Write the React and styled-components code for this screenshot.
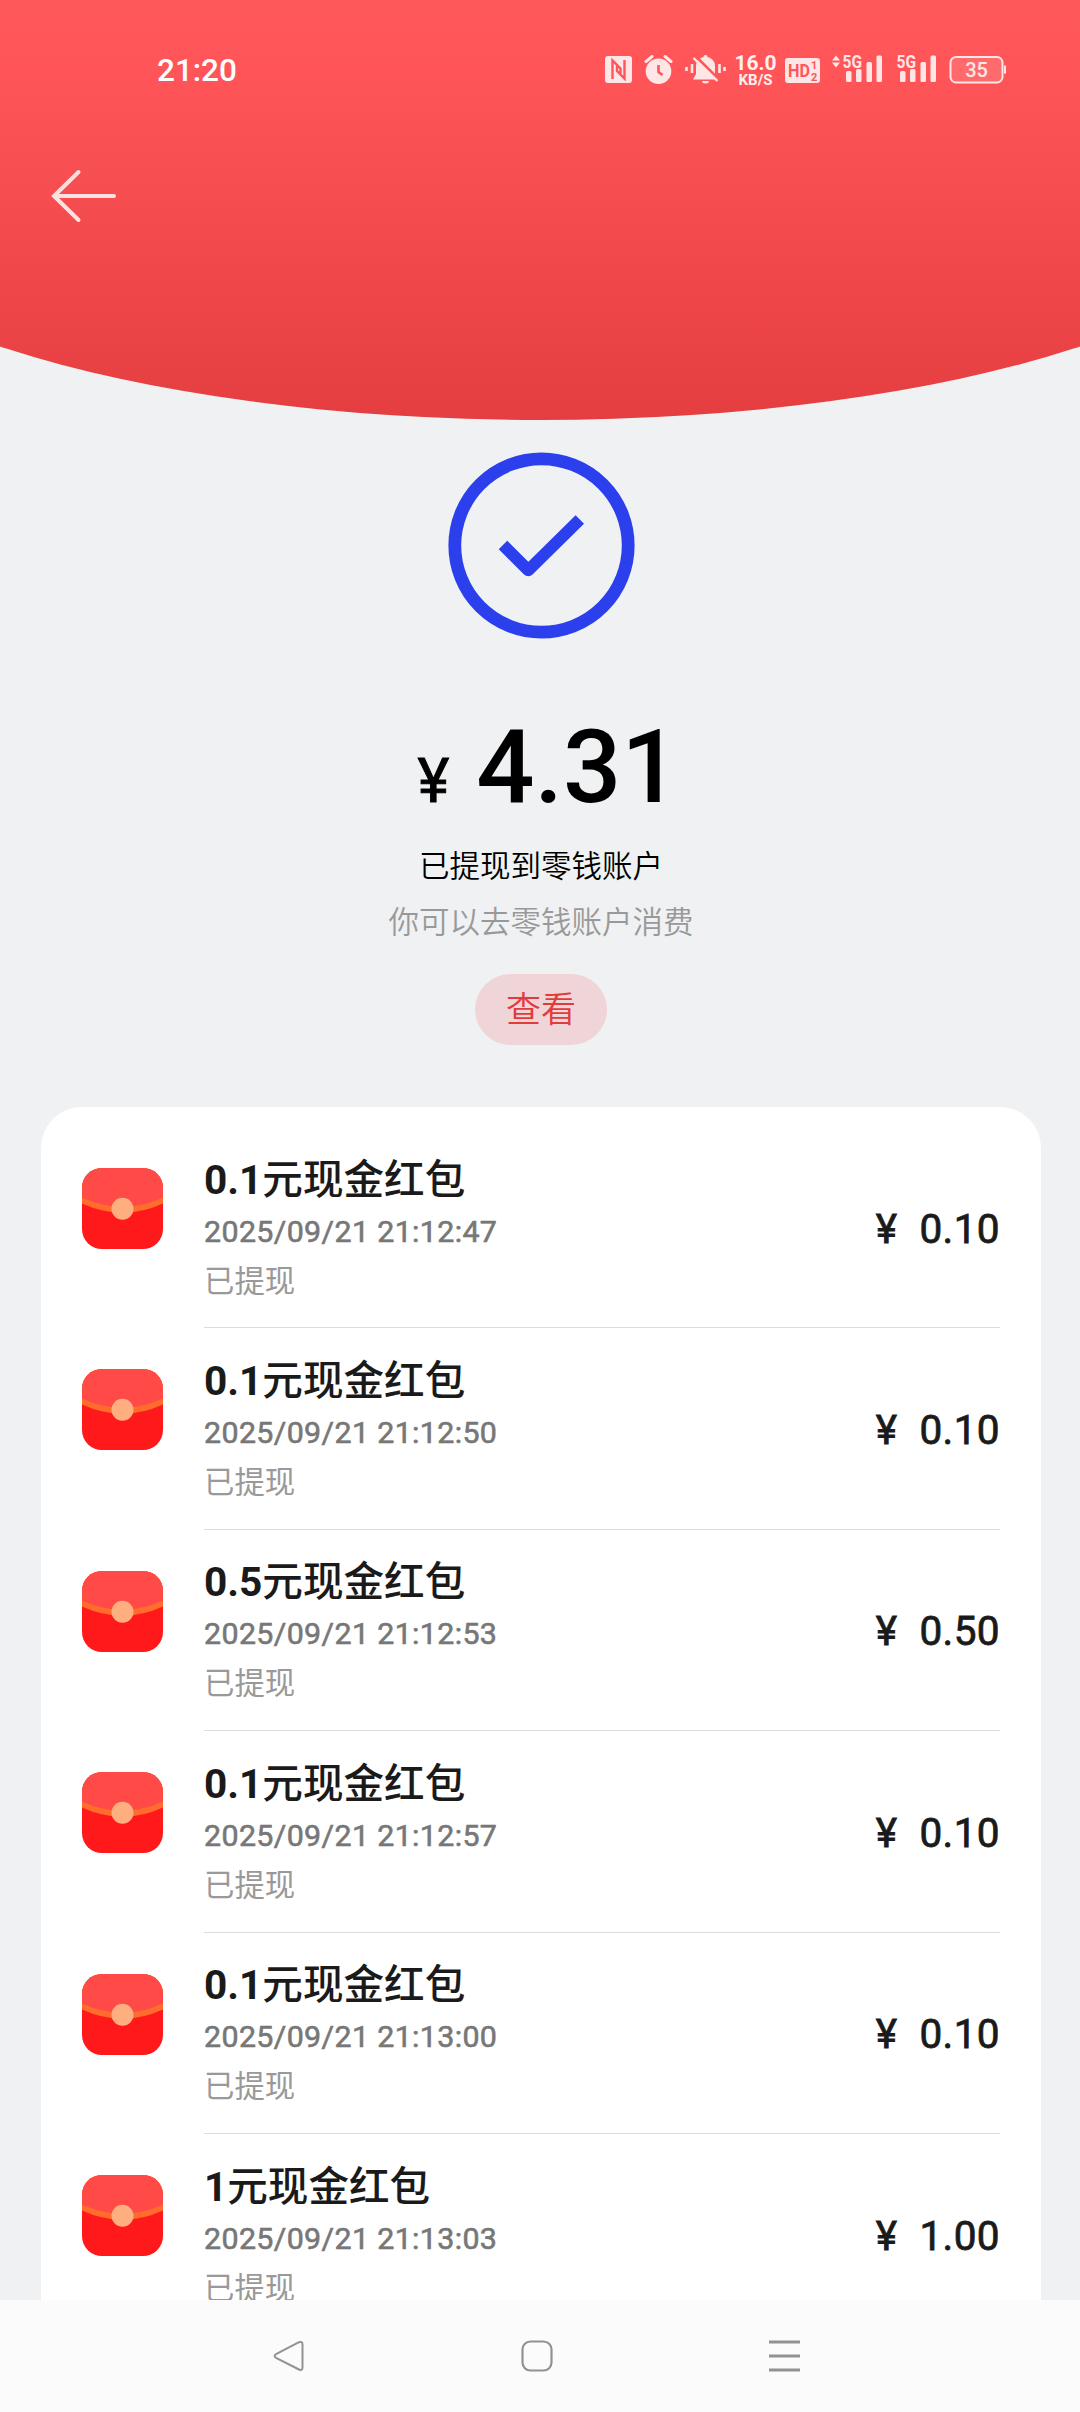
import React from "react";
import styled, { createGlobalStyle, css } from "styled-components";

const GlobalStyle = createGlobalStyle`
* { box-sizing: border-box; }
body {
margin: 0;
background: #eff1f3;
font-family: Roboto, "Noto Sans CJK SC", sans-serif;
}
svg { display: block; flex: none; }
`;

const Screen = styled.div`
display: flex;
flex-direction: column;
width: 1080px;
height: 2412px;
overflow: hidden;
background: #eff1f3;
`;

const Header = styled.header`
flex: none;
height: 420px;
overflow: hidden;
`;

/* wider than the screen, so that only the flat part of the arc shows */
const Arc = styled.div`
width: 140%;
height: 100%;
margin-left: -20%;
padding: 0 216px;
border-radius: 0 0 50% 50% / 0 0 245px 245px;
background: linear-gradient(#ff585b 0%, #ff5558 17%, #e53e40 100%);
`;

const StatusBar = styled.div`
display: flex;
align-items: center;
justify-content: space-between;
height: 140px;
padding: 0 74px 0 157px;
color: #ffe6e6;
`;

const Clock = styled.span`
font-size: 31.5px;
font-weight: 500;
color: #fff;
`;

const StatusIcons = styled.div`
display: flex;
align-items: center;
gap: 12px;
`;

const Speed = styled.div`
display: flex;
flex-direction: column;
align-items: center;
width: 35px;
padding-top: 1px;
font-size: 21px;
font-weight: 700;
line-height: 18px;
white-space: nowrap;
color: #fff0f0;
small {
font-size: 15px;
line-height: 16px;
}
`;

const BackButton = styled.button`
display: block;
margin: 26px 0 0 48px;
padding: 0;
border: 0;
background: none;
`;

const Result = styled.section`
display: flex;
flex: none;
flex-direction: column;
align-items: center;
height: 687px;
padding: 32px 0 0 2px;
`;

const Total = styled.div`
display: flex;
align-items: baseline;
gap: 27px;
margin-top: 67px;
padding-left: 15px;
font-size: 102.5px;
font-weight: 500;
line-height: 120px;
color: #000;
span {
font-size: 60.5px;
font-weight: 400;
-webkit-text-stroke: 0.9px;
}
`;

const Note = styled.p`
margin: 0;
font-size: 30.5px;
font-weight: 350;
line-height: 56px;
color: #000;
&:first-of-type {
margin-top: -3px;
}
${props => props.$muted && css`
color: #999;
`}
`;

const ViewButton = styled.button`
width: 132px;
height: 71px;
margin-top: 23px;
padding: 0 0 6px;
border: 0;
border-radius: 36px;
background: #efd5d7;
color: #e23b3b;
font-family: inherit;
font-size: 35px;
font-weight: 350;
`;

const Card = styled.ul`
flex: 1;
min-height: 0;
margin: 0 39px 0 41px;
padding: 19px 41px 0;
overflow: hidden;
list-style: none;
border-radius: 41px 41px 0 0;
background: #fff;
`;

const Item = styled.li`
display: flex;
height: 201.4px;
padding-top: 42px;
`;

const ItemBody = styled.div`
display: flex;
flex: 1;
align-items: center;
justify-content: space-between;
height: 202.4px;
margin: -42px 0 0 41px;
border-bottom: 1px solid #dcdcdc;
`;

const ItemText = styled.div`
padding-top: 5px;
`;

const Title = styled.div`
font-size: 40.6px;
font-weight: 500;
line-height: 56px;
color: #1a1a1a;
b {
font-weight: 700;
}
`;

const Time = styled.div`
font-size: 30.4px;
font-weight: 400;
letter-spacing: 0.36px;
line-height: 48px;
color: #777;
-webkit-text-stroke: 0.6px;
`;

const State = styled.div`
font-size: 30.4px;
line-height: 51px;
color: #999;
`;

const Amount = styled.div`
display: flex;
gap: 22px;
padding-top: 4px;
font-size: 40.5px;
font-weight: 400;
letter-spacing: 0.4px;
color: #1a1a1a;
-webkit-text-stroke: 0.8px;
`;

const NavBar = styled.nav`
display: flex;
flex: none;
align-items: center;
justify-content: space-between;
height: 112px;
padding: 0 279px 0 273px;
background: #fbfbfb;
color: #929292;
`;

const NfcIcon = () => (
    <svg width="27" height="36" viewBox="0 0 27 36">
        <rect y="4" width="27" height="27" rx="3" fill="currentColor" />
        <path d="M7.500 27V8.500l8 8v5M19.500 8v18.500l-7.500-7.500v-5" fill="none" stroke="#ff5659" strokeWidth="2.400" />
    </svg>
);

const AlarmIcon = () => (
    <svg width="29" height="36" viewBox="0 0 29 36">
        <circle cx="14.500" cy="19.200" r="12.800" fill="currentColor" />
        <path d="M2 9.500l6-5M27 9.500l-6-5" stroke="currentColor" strokeWidth="3" strokeLinecap="round" />
        <path d="M14.500 13v7l4 3" fill="none" stroke="#ff5659" strokeWidth="2.600" />
    </svg>
);

const MuteBellIcon = () => (
    <svg width="41" height="36" viewBox="0 0 41 36">
        <path d="M18.500 5a2 2 0 0 1 4 0c4.500 1.200 7.500 4.500 7.500 9v8l3.500 5.500H8L11 22v-8c0-4.500 3-7.800 7.500-9zM17 29h7a3.500 2.500 0 0 1-7 0z" fill="currentColor" />
        <path d="M10.500 4l24 24" stroke="#ff5659" strokeWidth="2.600" />
        <path d="M8.500 6l24 23" stroke="currentColor" strokeWidth="2.400" />
        <path d="M1.500 15v4M7 12v9M34.500 12v9M39.500 15v4" stroke="currentColor" strokeWidth="2.600" />
    </svg>
);

const HdIcon = () => (
    <svg width="35" height="36" viewBox="0 0 35 36">
        <rect y="6" width="35" height="25" rx="3" fill="currentColor" />
        <g fill="#ff5659" fontWeight="700">
            <text x="3" y="25" fontSize="18" textLength="22" lengthAdjust="spacingAndGlyphs">HD</text>
            <text x="26" y="17" fontSize="11">1</text>
            <text x="26" y="28.500" fontSize="11">2</text>
        </g>
    </svg>
);

const SignalIcon = ({ data }) => {
    const x = data ? 10 : 0;
    return (
        <svg width={data ? 51 : 42} height="36" viewBox={data ? "0 0 51 36" : "-1 0 42 36"}>
            {data && <path d="M0 8.500l4-5 4 5zM0 10.500l4 5 4-5z" fill="currentColor" />}
            <text x={x + 0.5} y="15.500" fontSize="18" fontWeight="700" fill="currentColor" textLength="19.500" lengthAdjust="spacingAndGlyphs">5G</text>
            <g fill="currentColor">
                <rect x={x + 4} y="19" width="5.500" height="11" rx="1.500" />
                <rect x={x + 14} y="17" width="5.500" height="13" rx="1.500" />
                <rect x={x + 24.5} y="10" width="5.500" height="20" rx="1.500" />
                <rect x={x + 34.5} y="3.500" width="5.500" height="26.500" rx="1.500" />
            </g>
        </svg>
    );
};

const BatteryIcon = () => (
    <svg width="57" height="36" viewBox="0 0 57 36">
        <rect x="1.500" y="5" width="52" height="25.500" rx="5.500" fill="#fff" fillOpacity=".13" stroke="currentColor" strokeWidth="2" />
        <path d="M56 13.500v8" stroke="currentColor" strokeWidth="2" />
        <text x="27.500" y="24.500" textAnchor="middle" fontSize="20" fontWeight="500" fill="currentColor">35</text>
    </svg>
);

const BackIcon = () => (
    <svg width="72" height="60" viewBox="0 0 72 60">
        <path d="M66 30H6.500M30.500 6L6 30l24.500 24" fill="none" stroke="#ffe0e0" strokeWidth="4" strokeLinecap="round" />
    </svg>
);

const DoneIcon = () => (
    <svg width="188" height="188" viewBox="0 0 188 188">
        <g fill="none" stroke="#2b3fec">
            <circle cx="94.500" cy="93.500" r="86.700" strokeWidth="12.800" />
            <path d="M56 93L81.300 118.300 132.800 67.500" strokeWidth="12" strokeLinejoin="round" />
        </g>
    </svg>
);

const PacketIcon = () => (
    <svg width="81" height="81" viewBox="0 0 81 81">
        <rect width="81" height="81" rx="20" fill="#ff191b" />
        <path d="M0 35.500V20A20 20 0 0 1 20 0h41a20 20 0 0 1 20 20v15.500Q40.500 54 0 35.500z" fill="#ff6c2b" />
        <path d="M0 29.500V20A20 20 0 0 1 20 0h41a20 20 0 0 1 20 20v9.500Q40.500 48 0 29.500z" fill="#ff4a48" />
        <circle cx="40.500" cy="40.700" r="11" fill="#ffae80" />
    </svg>
);

const packets = [
    { yuan: "0.1", time: "2025/09/21 21:12:47", amount: "0.10" },
    { yuan: "0.1", time: "2025/09/21 21:12:50", amount: "0.10" },
    { yuan: "0.5", time: "2025/09/21 21:12:53", amount: "0.50" },
    { yuan: "0.1", time: "2025/09/21 21:12:57", amount: "0.10" },
    { yuan: "0.1", time: "2025/09/21 21:13:00", amount: "0.10" },
    { yuan: "1", time: "2025/09/21 21:13:03", amount: "1.00" },
];

const App = () => (
    <Screen>
        <GlobalStyle />
        <Header>
            <Arc>
                <StatusBar>
                    <Clock>21:20</Clock>
                    <StatusIcons>
                        <NfcIcon />
                        <AlarmIcon />
                        <MuteBellIcon />
                        <Speed>16.0<small>KB/S</small></Speed>
                        <HdIcon />
                        <SignalIcon data />
                        <SignalIcon />
                        <BatteryIcon />
                    </StatusIcons>
                </StatusBar>
                <BackButton><BackIcon /></BackButton>
            </Arc>
        </Header>
        <Result>
            <DoneIcon />
            <Total><span>¥</span>4.31</Total>
            <Note>已提现到零钱账户</Note>
            <Note $muted>你可以去零钱账户消费</Note>
            <ViewButton>查看</ViewButton>
        </Result>
        <Card>
            {packets.map(packet => (
                <Item key={packet.time}>
                    <PacketIcon />
                    <ItemBody>
                        <ItemText>
                            <Title><b>{packet.yuan}</b>元现金红包</Title>
                            <Time>{packet.time}</Time>
                            <State>已提现</State>
                        </ItemText>
                        <Amount><span>¥</span>{packet.amount}</Amount>
                    </ItemBody>
                </Item>
            ))}
        </Card>
        <NavBar>
            <svg width="32" height="32" viewBox="0 0 32 32">
                <path d="M26 2.200Q29.500 1 29.500 4.500V27.500Q29.500 31 26 29.500L3.500 18.200Q-.5 16 3.500 13.800z" fill="none" stroke="currentColor" strokeWidth="2" />
            </svg>
            <svg width="32" height="32" viewBox="0 0 32 32">
                <rect x="1.500" y="1.500" width="29" height="29" rx="8" fill="none" stroke="currentColor" strokeWidth="2.200" />
            </svg>
            <svg width="32" height="32" viewBox="0 0 32 32">
                <path d="M0 2h31M0 16h31M0 30h31" stroke="currentColor" strokeWidth="2.800" />
            </svg>
        </NavBar>
    </Screen>
);

export default App;
